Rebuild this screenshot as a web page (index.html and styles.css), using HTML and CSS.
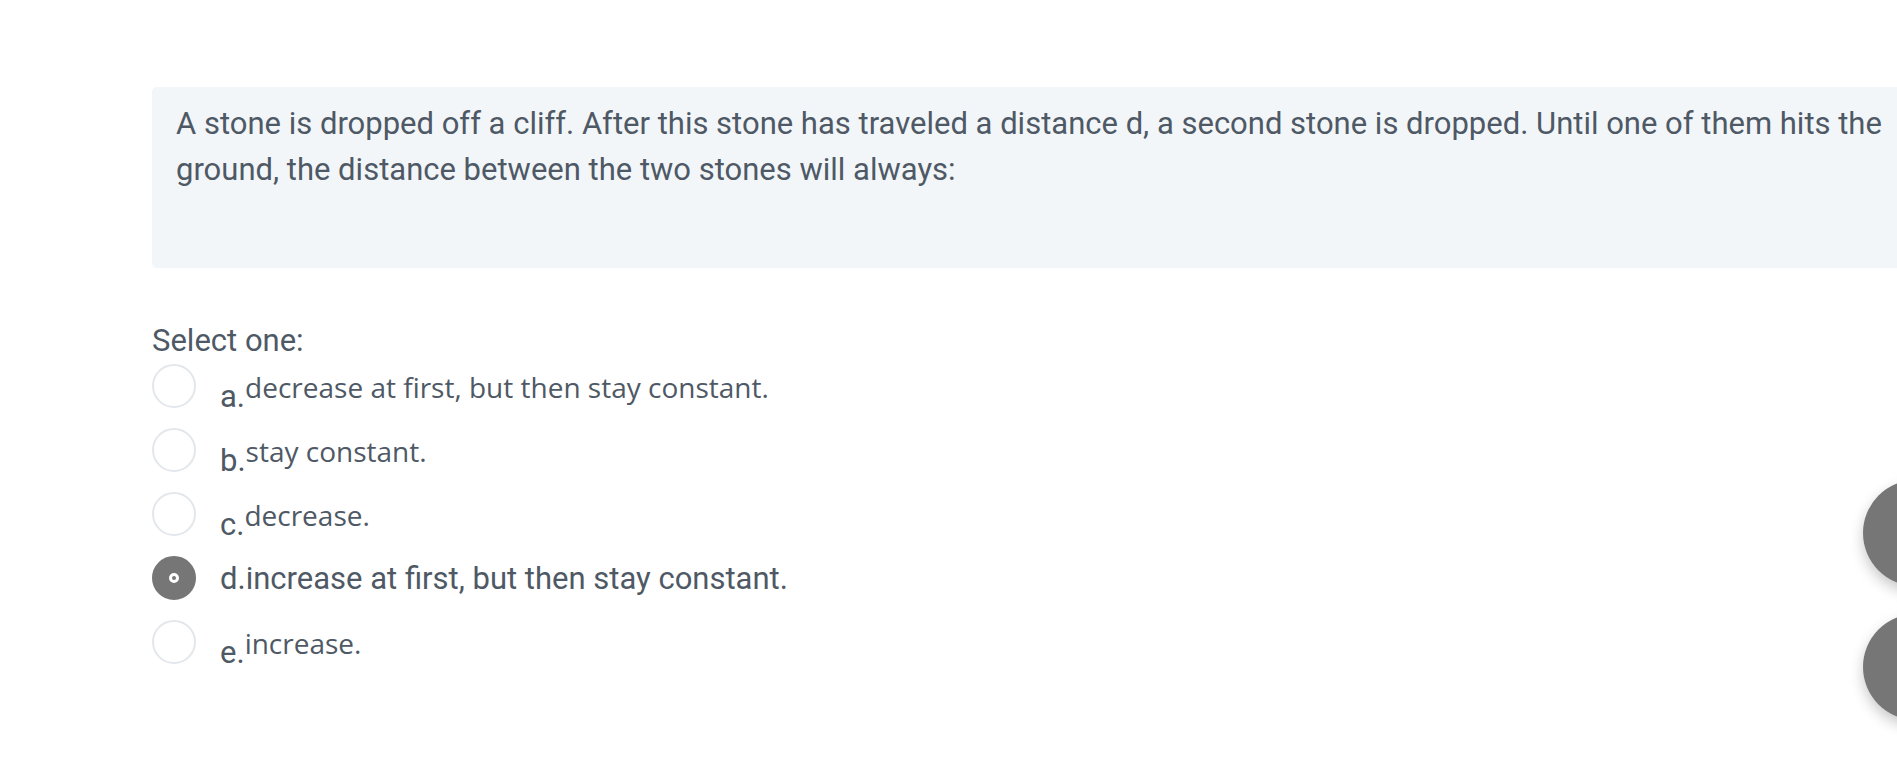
FILE: index.html
```html
<!DOCTYPE html>
<html lang="en">
<head>
<meta charset="utf-8">
<title>Question</title>
<link rel="stylesheet" href="styles.css">
</head>
<body>
<div class="que">
  <div class="formulation">
    <p class="qtext">A stone is dropped off a cliff. After this stone has traveled a distance d, a second stone is dropped. Until one of them hits the ground, the distance between the two stones will always:</p>
  </div>
  <div class="ablock">
    <div class="prompt">Select one:</div>
    <div class="answer">
      <div class="row">
        <span class="radio"></span>
        <span class="label">a.<span class="atext">decrease at first, but then stay constant.</span></span>
      </div>
      <div class="row">
        <span class="radio"></span>
        <span class="label">b.<span class="atext">stay constant.</span></span>
      </div>
      <div class="row">
        <span class="radio"></span>
        <span class="label">c.<span class="atext">decrease.</span></span>
      </div>
      <div class="row">
        <span class="radio checked"><span class="dot"></span></span>
        <span class="label">d.increase at first, but then stay constant.</span>
      </div>
      <div class="row">
        <span class="radio"></span>
        <span class="label">e.<span class="atext">increase.</span></span>
      </div>
    </div>
  </div>
</div>
<div class="fab fab-one"></div>
<div class="fab fab-two"></div>
</body>
</html>
```
FILE: styles.css
```css
html, body {
  margin: 0;
  padding: 0;
  overflow: hidden;
  background: #ffffff;
}
body {
  width: 1897px;
  height: 763px;
  position: relative;
  font-family: Roboto, "Liberation Sans", sans-serif;
  color: #4e5965;
}
.que {
  padding: 87px 0 0 152px;
}
.formulation {
  width: 1800px;
  height: 181px;
  box-sizing: border-box;
  background: #f2f6f9;
  border-radius: 5px;
  padding: 14px 24px 0 24px;
}
.qtext {
  margin: 0;
  font-size: 31px;
  line-height: 46px;
}
.ablock {
  padding-top: 55px;
}
.prompt {
  font-size: 31px;
  line-height: 36px;
  height: 41px;
}
.answer {
  display: flex;
  flex-direction: column;
}
.row {
  display: flex;
  align-items: flex-start;
  height: 64px;
}
.radio {
  width: 44px;
  height: 44px;
  box-sizing: border-box;
  border: 2px solid #e3e7eb;
  border-radius: 50%;
  background: #fff;
  display: flex;
  align-items: center;
  justify-content: center;
  flex: none;
}
.radio.checked {
  background: #767676;
  border-color: #767676;
}
.dot {
  width: 10px;
  height: 10px;
  box-sizing: border-box;
  border-radius: 50%;
  background: #767676;
  border: 3px solid #ffffff;
}
.label {
  margin-left: 24px;
  font-size: 31px;
  line-height: 44px;
  padding-top: 1px;
  white-space: nowrap;
}
.atext {
  font-family: "Open Sans", "Noto Sans", sans-serif;
  font-size: 28px;
  vertical-align: 9px;
}
.fab {
  position: absolute;
  width: 106px;
  height: 106px;
  border-radius: 50%;
  background: #767676;
  box-shadow: 0 6px 14px rgba(0, 0, 0, 0.22);
  left: 1863px;
}
.fab-one {
  top: 480px;
}
.fab-two {
  top: 614px;
}
```
